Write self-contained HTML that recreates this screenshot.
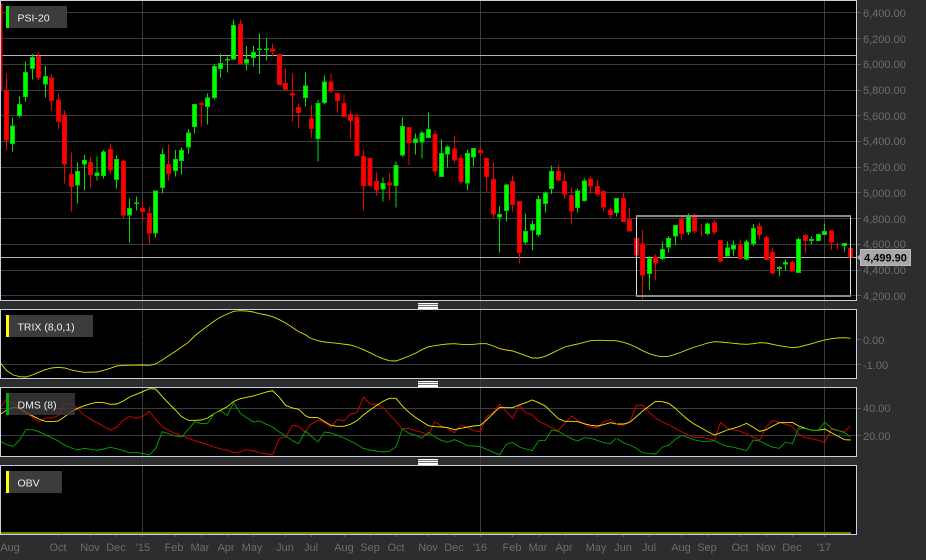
<!DOCTYPE html>
<html><head><meta charset="utf-8"><title>PSI-20</title>
<style>
html,body{margin:0;padding:0;background:#2d2d2d;overflow:hidden}
svg{display:block}
text{font-family:"Liberation Sans",sans-serif}
.ax text{font-size:11px;fill:#6c6c6c}
.lg{font-size:10.5px;fill:#f0f0f0}
.c path{shape-rendering:crispEdges}
.rw{stroke:#f00000;stroke-width:3;fill:none}
.gw{stroke:#00e000;stroke-width:3;fill:none}
.rb{stroke:#e00000;stroke-width:3;fill:#ff0000}
.gb{stroke:#00d000;stroke-width:3;fill:#00ff00}
.l polyline{fill:none;stroke-width:2.7}
.y{stroke:#f0f000}.r{stroke:#e00000}.g{stroke:#00a800}
.ty{stroke:#e0e000}
</style></head>
<body>
<svg width="926" height="560" viewBox="0 0 926 560" xmlns="http://www.w3.org/2000/svg">
<rect width="926" height="560" fill="#2d2d2d"/>
<g fill="#000">
<rect x="0" y="0" width="857" height="301"/>
<rect x="0" y="309" width="857" height="70"/>
<rect x="0" y="387" width="857" height="70"/>
<rect x="0" y="465" width="857" height="70"/>
</g>
<!-- grid -->
<path shape-rendering="crispEdges" stroke="#3c3c3c" fill="none" d="M0 12.5H857M0 38.5H857M0 64.5H857M0 90.5H857M0 115.5H857M0 141.5H857M0 167.5H857M0 192.5H857M0 218.5H857M0 244.5H857M0 270.5H857M0 295.5H857M0 364.5H857M0 408.5H857M0 435.5H857M142.5 0V534M480.5 0V534M824.5 0V534"/>
<path shape-rendering="crispEdges" stroke="#000" fill="none" d="M0 339.5H857"/>
<!-- horizontal lines -->
<path shape-rendering="crispEdges" stroke="#b4b4b4" fill="none" d="M0 55.5H857M0 257.5H857"/>
<!-- candles left -->
<g class="c" transform="scale(.33333)">
<path class="rw" d="M1 10V285M19 220V450M116 157V240M155 222V332M175 280V388M194 332V550M214 458V634M272 473V562M331 430V524M370 478V655M428 606V660M448 620V733M506 433V541M604 304V380M721 58V192M818 130V170M838 160V255M857 205V270M877 220V364M896 310V385"/>
<path class="gw" d="M38 352V455M58 290V352M77 185V305M97 162V238M136 198V292M233 488V610M253 465V571M291 470V541M311 450V536M350 466V565M389 595V728M409 590V632M467 572V712M487 445V580M526 450V530M545 442V523M565 388V460M584 312V400M623 280V374M643 192V298M662 160V232M682 170V218M701 58V180M740 138V212M760 138V200M779 100V220M799 115V182M916 218V320"/>
<path class="rb" d="M-3 12h9V270h-9zM13 271h12V420h-12zM110 169h12V233h-12zM149 234h12V301h-12zM169 300h12V365h-12zM188 345h12V492h-12zM208 524h12V560h-12zM266 487h12V523h-12zM325 449h12V510h-12zM364 485h12V645h-12zM422 625h12V634h-12zM442 641h12V699h-12zM500 494h12V521h-12zM598 310h12V314h-12zM715 74h12V190h-12zM812 147h12V153h-12zM832 163h12V254h-12zM851 251h12V268h-12zM871 281h12V285h-12zM890 322h12V338h-12z"/>
<path class="gb" d="M32 378h12V431h-12zM52 313h12V346h-12zM71 217h12V290h-12zM91 173h12V205h-12zM130 229h12V252h-12zM227 514h12V555h-12zM247 481h12V492h-12zM285 519h12V527h-12zM305 456h12V527h-12zM344 479h12V538h-12zM383 626h12V645h-12zM403 609h12V611h-12zM461 573h12V699h-12zM481 464h12V563h-12zM520 479h12V512h-12zM539 451h12V481h-12zM559 399h12V441h-12zM578 314h12V380h-12zM617 294h12V320h-12zM637 199h12V292h-12zM656 190h12V206h-12zM676 178h12V180h-12zM695 76h12V177h-12zM734 179h12V189h-12zM754 158h12V172h-12zM773 147h12V149h-12zM793 147h12V149h-12zM910 258h12V293h-12z"/>
</g>
<!-- candles middle -->
<g class="c" transform="translate(310,0) scale(.33333)">
<path class="rw" d="M4 315V412M63 220V280M82 280V338M102 283V350M121 332V415M141 340V467M160 450V632M180 475V560M199 517V587M238 520V601M297 381V495M375 392V526M433 408V490M453 463V553M511 443V470M530 473V575M550 487V655M608 527V634M628 603V790M745 493V545M764 520V597M784 563V673M842 530V582M862 540V590M881 570V635M901 622V655"/>
<path class="gw" d="M24 300V485M44 226V312M219 532V605M258 485V623M277 352V470M316 401V464M336 392V475M355 338V413M394 418V530M413 436V503M472 448V572M491 445V500M569 620V758M589 552V664M647 640V733M667 662V752M686 587V710M706 575V638M725 497V582M803 565V637M823 535V605M920 595V650"/>
<path class="rb" d="M-2 357h12V386h-12zM57 246h12V273h-12zM76 281h12V302h-12zM96 311h12V350h-12zM115 344h12V362h-12zM135 352h12V467h-12zM154 469h12V557h-12zM174 476h12V556h-12zM193 545h12V570h-12zM232 549h12V555h-12zM291 383h12V428h-12zM369 404h12V513h-12zM427 447h12V480h-12zM447 476h12V545h-12zM505 452h12V458h-12zM524 475h12V530h-12zM544 539h12V642h-12zM602 544h12V613h-12zM622 605h12V758h-12zM739 515h12V540h-12zM758 545h12V582h-12zM778 587h12V633h-12zM836 537h12V558h-12zM856 560h12V582h-12zM875 575h12V621h-12zM895 630h12V643h-12z"/>
<path class="gb" d="M18 310h12V416h-12zM38 246h12V307h-12zM213 551h12V567h-12zM252 497h12V557h-12zM271 380h12V465h-12zM310 417h12V427h-12zM330 399h12V426h-12zM349 389h12V412h-12zM388 461h12V530h-12zM407 441h12V462h-12zM466 461h12V549h-12zM485 446h12V471h-12zM563 644h12V651h-12zM583 555h12V632h-12zM641 694h12V726h-12zM661 673h12V690h-12zM680 599h12V703h-12zM700 579h12V610h-12zM719 514h12V566h-12zM797 573h12V623h-12zM817 543h12V602h-12zM914 596h12V638h-12z"/>
</g>
<!-- candles right -->
<g class="c" transform="translate(616,0) scale(.33333)">
<path class="rw" d="M22 578V665M41 625V693M61 715V765M80 690V898M119 764V842M197 650V722M236 640V700M256 672V710M295 660V703M314 720V788M373 718V780M431 667V718M451 706V780M470 742V824M529 782V814M568 700V760M646 690V750M665 727V748M704 745V771"/>
<path class="gw" d="M100 768V870M139 725V780M158 708V757M178 675V735M217 640V705M275 668V705M334 725V768M353 722V768M392 718V782M412 672V738M490 798V828M509 778V812M548 712V818M587 710V732M607 700V725M626 670V705M685 730V755"/>
<path class="rb" d="M16 596h12V665h-12zM35 659h12V693h-12zM55 716h12V765h-12zM74 732h12V825h-12zM113 771h12V789h-12zM191 658h12V701h-12zM230 649h12V693h-12zM289 669h12V696h-12zM308 721h12V783h-12zM367 735h12V776h-12zM425 679h12V704h-12zM445 712h12V779h-12zM464 757h12V819h-12zM523 788h12V813h-12zM562 707h12V722h-12zM640 693h12V726h-12zM698 746h12V771h-12z"/>
<path class="gb" d="M94 776h12V821h-12zM133 749h12V775h-12zM152 715h12V741h-12zM172 677h12V708h-12zM211 647h12V696h-12zM269 672h12V700h-12zM328 744h12V768h-12zM347 736h12V747h-12zM386 726h12V777h-12zM406 686h12V731h-12zM484 803h12V806h-12zM503 788h12V792h-12zM542 719h12V818h-12zM581 719h12V722h-12zM601 704h12V722h-12zM620 695h12V704h-12zM679 731h12V736h-12z"/>
</g>
<!-- selection rectangle -->
<g shape-rendering="crispEdges" fill="none">
<path stroke="#dcdcdc" d="M636.5 215V297M850.5 215V297"/>
<path stroke="#8c8c8c" stroke-width="2" d="M636 216H851M636 296H851"/>
</g>
<!-- TRIX -->
<g class="l"><g transform="translate(0,300) scale(.33333)">
<polyline class="ty" points="2,190 20,212 40,225 60,230 78,231 97,225 116,217 136,209 155,204 175,202 194,204 214,210 233,214 253,217 291,216 311,211 331,205 350,198 370,196 428,195 448,196 467,192 487,180 506,167 526,154 545,141 565,127 584,108 604,92 623,78 643,63 662,51 682,42 701,34 721,32 740,33 760,36 779,41 799,45 818,50 838,59 857,69 877,82 896,95 916,104 930,114"/></g>
<g transform="translate(310,300) scale(.33333)">
<polyline class="ty" points="0,114 24,122 44,126 63,128 82,130 121,135 141,141 160,149 180,158 199,168 219,176 238,182 258,183 277,176 297,168 316,160 336,149 355,140 375,137 394,134 413,132 433,131 453,133 472,134 491,133 511,131 530,131 550,138 569,146 589,150 608,153 628,160 647,167 667,174 686,174 706,169 725,160 745,150 764,141 784,136 803,132 823,127 842,122 862,121 881,121 901,122 918,122"/></g>
<g transform="translate(616,300) scale(.33333)">
<polyline class="ty" points="0,122 22,127 41,133 61,142 80,152 100,161 119,167 139,170 158,169 178,163 197,156 217,148 236,141 256,135 275,129 295,125 314,126 334,128 353,130 373,132 392,133 412,131 431,128 451,129 470,133 490,137 509,140 529,143 548,141 568,136 587,131 607,125 626,120 646,116 665,114 685,113 704,115"/></g>
</g>
<!-- DMS -->
<g class="l"><g transform="translate(0,300) scale(.33333)">
<polyline class="r" points="2,322 20,298 40,312 58,325 78,340 97,351 116,366 136,355 155,354 175,347 194,312 214,309 233,326 253,346 272,358 291,368 311,379 331,390 350,382 370,360 389,349 409,355 428,349 448,334 467,358 487,380 506,392 526,400 545,407 565,415 584,422 604,428 623,434 643,441 662,447 682,451 701,458 721,455 740,449 760,453 779,458 799,462 818,464 838,415 857,411 877,376 896,379 916,397 930,375"/>
<polyline class="y" points="2,342 20,330 40,322 58,325 78,337 97,347 116,357 136,364 155,365 175,363 194,350 214,335 233,325 253,317 272,311 291,307 311,308 331,313 350,312 370,303 389,291 409,283 428,275 448,266 467,267 487,290 506,310 526,330 545,350 565,361 584,361 604,360 623,354 643,341 662,331 682,320 701,304 721,296 740,292 760,288 779,282 799,276 818,272 838,292 857,316 877,324 896,328 916,347 930,353"/>
<polyline class="g" points="2,424 20,434 40,439 58,421 78,389 97,389 116,395 136,404 155,413 175,423 194,436 214,444 233,450 253,445 272,448 291,451 311,447 331,442 350,446 370,452 389,458 409,458 428,460 448,465 467,445 487,395 506,401 526,408 545,411 565,388 584,365 604,371 623,370 643,340 662,333 682,346 701,308 721,340 740,353 760,366 779,363 799,373 818,381 838,396 857,408 877,422 896,431 916,393 930,405"/></g>
<g transform="translate(310,300) scale(.33333)">
<polyline class="r" points="0,375 24,360 44,368 63,381 82,358 102,363 121,342 141,338 160,292 180,312 199,313 219,322 238,342 258,365 277,386 297,385 316,392 336,397 355,406 375,365 394,378 413,385 433,398 453,375 472,382 491,392 511,395 530,350 550,337 569,313 589,335 608,355 628,315 647,338 667,345 686,364 706,373 725,384 745,391 764,371 784,348 803,361 823,373 842,381 862,384 881,366 901,358 918,372"/>
<polyline class="y" points="0,352 24,353 44,365 63,376 82,379 102,379 121,373 141,362 160,345 180,330 199,317 219,304 238,295 258,295 277,318 297,337 316,352 336,365 355,377 375,380 394,381 413,383 433,389 453,385 472,381 491,378 511,376 530,360 550,340 569,322 589,323 608,323 628,315 647,308 667,300 686,308 706,318 725,337 745,356 764,364 784,364 803,365 823,371 842,376 862,378 881,374 901,368 918,372"/>
<polyline class="g" points="0,405 24,426 44,396 63,399 82,406 102,414 121,423 141,434 160,445 180,450 199,453 219,456 238,454 258,441 277,386 297,400 316,406 336,414 355,397 375,411 394,421 413,427 433,419 453,427 472,437 491,438 511,440 530,448 550,457 569,464 589,433 608,427 628,441 647,447 667,452 686,422 706,421 725,390 745,394 764,405 784,416 803,423 823,413 842,415 862,421 881,428 901,431 918,415"/></g>
<g transform="translate(616,300) scale(.33333)">
<polyline class="r" points="2,372 22,376 41,367 61,316 80,315 100,338 119,354 139,366 158,374 178,385 197,396 217,405 236,413 256,412 275,416 295,421 314,367 334,384 353,390 373,394 392,402 412,412 431,420 451,380 470,362 490,367 509,373 529,379 548,402 568,413 587,416 607,421 626,427 646,388 665,392 685,395 704,378"/>
<polyline class="y" points="2,372 22,372 41,367 61,350 80,333 100,318 119,304 139,305 158,310 178,325 197,343 217,360 236,373 256,384 275,395 295,405 314,398 334,390 353,385 373,378 392,370 412,382 431,394 451,389 470,378 490,368 509,368 529,367 548,378 568,385 587,391 607,391 626,387 646,398 665,408 685,419 704,420"/>
<polyline class="g" points="2,415 22,428 41,435 61,445 80,458 100,461 119,462 139,441 158,436 178,418 197,406 217,413 236,420 256,424 275,424 295,422 314,432 334,439 353,442 373,447 392,452 412,420 431,423 451,433 470,442 490,445 509,426 529,432 548,384 568,386 587,391 607,391 626,367 646,385 665,391 685,398 704,411"/></g>
</g>
<!-- OBV line -->
<rect x="1" y="532" width="850" height="2" fill="#7f7f00"/>
<!-- frames -->
<g fill="none" stroke="#c8d0e4" shape-rendering="crispEdges">
<rect x=".5" y=".5" width="856" height="300"/>
<rect x=".5" y="309.5" width="856" height="69"/>
<rect x=".5" y="387.5" width="856" height="69"/>
<rect x=".5" y="465.5" width="856" height="69"/>
</g>
<!-- legends -->
<rect x="9" y="6" width="58" height="22" fill="#3c3c3c"/><rect x="6" y="6" width="3" height="22" fill="#00ff00"/>
<text class="lg" x="17.5" y="21.5">PSI-20</text>
<rect x="9" y="315" width="84" height="22" fill="#3c3c3c"/><rect x="6" y="315" width="3" height="22" fill="#ffff00"/>
<text class="lg" x="17.5" y="330.5">TRIX (8,0,1)</text>
<rect x="9" y="393" width="66" height="22" fill="#3c3c3c" fill-opacity=".8"/><rect x="6" y="393" width="3" height="22" fill="#00b000"/>
<text class="lg" x="17.5" y="408.5">DMS (8)</text>
<rect x="9" y="471" width="53" height="22" fill="#3c3c3c"/><rect x="6" y="471" width="3" height="22" fill="#ffff00"/>
<text class="lg" x="17.5" y="486.5">OBV</text>
<!-- handles -->
<g shape-rendering="crispEdges">
<rect x="418" y="303" width="20" height="6" fill="#fff"/><path stroke="#777" d="M418 304.5H438M418 306.5H438"/>
<rect x="418" y="381" width="20" height="6" fill="#fff"/><path stroke="#777" d="M418 382.5H438M418 384.5H438"/>
<rect x="418" y="459" width="20" height="6" fill="#fff"/><path stroke="#777" d="M418 460.5H438M418 462.5H438"/>
</g>
<!-- axis ticks -->
<path shape-rendering="crispEdges" stroke="#5a5a5a" fill="none" d="M857 12.5H861M857 38.5H861M857 64.5H861M857 90.5H861M857 115.5H861M857 141.5H861M857 167.5H861M857 192.5H861M857 218.5H861M857 244.5H861M857 270.5H861M857 295.5H861M857 339.5H861M857 364.5H861M857 408.5H861M857 435.5H861M58.5 535V537M90.5 535V537M116.5 535V537M142.5 535V537M175.5 535V537M201.5 535V537M227.5 535V537M253.5 535V537M285.5 535V537M311.5 535V537M344.5 535V537M370.5 535V537M396.5 535V537M428.5 535V537M454.5 535V537M480.5 535V537M512.5 535V537M539.5 535V537M565.5 535V537M597.5 535V537M623.5 535V537M649.5 535V537M681.5 535V537M707.5 535V537M740.5 535V537M766.5 535V537M792.5 535V537M824.5 535V537"/>
<!-- axis labels -->
<g class="ax">
<text x="863" y="17">6,400.00</text>
<text x="863" y="43">6,200.00</text>
<text x="863" y="68">6,000.00</text>
<text x="863" y="94">5,800.00</text>
<text x="863" y="120">5,600.00</text>
<text x="863" y="145">5,400.00</text>
<text x="863" y="171">5,200.00</text>
<text x="863" y="197">5,000.00</text>
<text x="863" y="223">4,800.00</text>
<text x="863" y="248">4,600.00</text>
<text x="863" y="274">4,400.00</text>
<text x="863" y="300">4,200.00</text>
<text x="863" y="344">0.00</text>
<text x="863" y="369">-1.00</text>
<text x="863" y="412">40.00</text>
<text x="863" y="440">20.00</text>
</g>
<g class="ax" text-anchor="middle">
<text x="10" y="551">Aug</text>
<text x="58" y="551">Oct</text>
<text x="90" y="551">Nov</text>
<text x="116" y="551">Dec</text>
<text x="143" y="551">'15</text>
<text x="174" y="551">Feb</text>
<text x="200" y="551">Mar</text>
<text x="226" y="551">Apr</text>
<text x="252" y="551">May</text>
<text x="285" y="551">Jun</text>
<text x="311" y="551">Jul</text>
<text x="344" y="551">Aug</text>
<text x="370" y="551">Sep</text>
<text x="396" y="551">Oct</text>
<text x="428" y="551">Nov</text>
<text x="454" y="551">Dec</text>
<text x="480" y="551">'16</text>
<text x="512" y="551">Feb</text>
<text x="538" y="551">Mar</text>
<text x="564" y="551">Apr</text>
<text x="596" y="551">May</text>
<text x="623" y="551">Jun</text>
<text x="649" y="551">Jul</text>
<text x="681" y="551">Aug</text>
<text x="707" y="551">Sep</text>
<text x="740" y="551">Oct</text>
<text x="766" y="551">Nov</text>
<text x="792" y="551">Dec</text>
<text x="824" y="551">'17</text>
</g>
<!-- price label -->
<path d="M857 257.5L860.5 254V261Z" fill="#a8a8a8"/>
<rect x="860.5" y="249.5" width="50" height="16" fill="#a8a8a8" stroke="#bdbdbd"/>
<text x="885.5" y="261.5" text-anchor="middle" font-size="11" font-weight="bold" fill="#000">4,499.90</text>
</svg>
</body></html>
